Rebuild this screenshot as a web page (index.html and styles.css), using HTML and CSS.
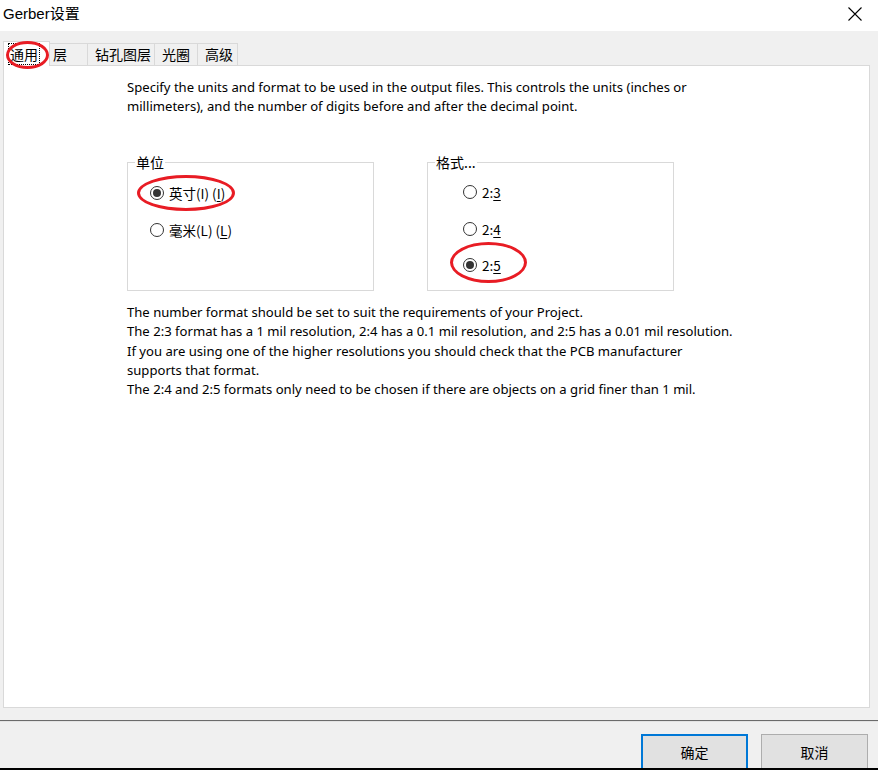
FILE: index.html
```html
<!DOCTYPE html>
<html lang="zh-CN">
<head>
  <meta charset="UTF-8">
  <title>Gerber设置</title>
  <link rel="stylesheet" href="styles.css">
</head>
<body>
  <div class="window">
    <div class="titlebar">
      <span class="title">Gerber设置</span>
      <svg class="close" viewBox="0 0 14 14"><path d="M0.5 0.5L13.5 13.5M13.5 0.5L0.5 13.5" stroke="#000" stroke-width="1.1" fill="none"/></svg>
    </div>

    <div class="dialog">
      <div class="tabs">
        <div class="tab active"><span class="focus">通用</span><span class="mark mark-tab"></span></div>
        <div class="tab t-layer">层</div>
        <div class="tab t-drill">钻孔图层</div>
        <div class="tab t-aperture">光圈</div>
        <div class="tab t-adv">高级</div>
      </div>

      <div class="panel">
        <p class="intro">Specify the units and format to be used in the output files. This controls the units (inches or millimeters), and the number of digits before and after the decimal point.</p>

        <div class="groups">
          <fieldset class="group">
            <legend>单位</legend>
            <label class="radio">
              <span class="dot checked"></span>英寸(I) (<u>I</u>)
              <span class="mark mark-inch"></span>
            </label>
            <label class="radio">
              <span class="dot"></span>毫米(L) (<u>L</u>)
            </label>
          </fieldset>

          <fieldset class="group format">
            <legend>格式...</legend>
            <label class="radio"><span class="dot"></span>2:<u>3</u></label>
            <label class="radio"><span class="dot"></span>2:<u>4</u></label>
            <label class="radio">
              <span class="dot checked"></span>2:<u>5</u>
              <span class="mark mark-fmt"></span>
            </label>
          </fieldset>
        </div>

        <div class="notes">
          <p>The number format should be set to suit the requirements of your Project.</p>
          <p>The 2:3 format has a 1 mil resolution, 2:4 has a 0.1 mil resolution, and 2:5 has a 0.01 mil resolution.</p>
          <p>If you are using one of the higher resolutions you should check that the PCB manufacturer<br>supports that format.</p>
          <p>The 2:4 and 2:5 formats only need to be chosen if there are objects on a grid finer than 1 mil.</p>
        </div>
      </div>

      <div class="separator"></div>

      <div class="buttons">
        <button class="btn default">确定</button>
        <button class="btn">取消</button>
      </div>
    </div>
  </div>
</body>
</html>
```

FILE: styles.css
```css
*, *::before, *::after { box-sizing: border-box; }
body { margin: 0; background: #fff; font-family: "Noto Sans", "Noto Sans CJK SC", sans-serif; font-size: 13.1px; color: #000; }
.window { width: 878px; height: 770px; display: flex; flex-direction: column; border-bottom: 2px solid #000; overflow: hidden; }

/* タイトルバー */
.titlebar { height: 31px; flex-shrink: 0; display: flex; align-items: center; justify-content: space-between; background: #fff; padding: 0 16px 0 3px; }
.title { font-size: 15px; margin-top: -6px; font-family: "Liberation Sans", "Noto Sans CJK SC", sans-serif; }
.close { width: 14px; height: 14px; margin-top: -4px; }

.dialog { flex: 1; background: #f0f0f0; display: flex; flex-direction: column; }

/* タブ */
.tabs { display: flex; align-items: flex-end; padding: 10px 0 0 3px; height: 34px; position: relative; z-index: 1; }
.tab { height: 22px; padding-left: 7px; border: 1px solid #d9d9d9; border-bottom: none; border-left: none; background: #f0f0f0; font-family: "Noto Sans CJK SC", sans-serif; font-size: 14px; line-height: 20px; white-space: nowrap; }
.t-layer { width: 38px; padding-left: 3px; }
.t-drill { width: 67px; }
.t-aperture { width: 43px; }
.t-adv { width: 40px; }
.tab.active { width: 47px; height: 25px; background: #fff; border-left: 1px solid #d9d9d9; padding: 2px 0 0 5px; position: relative; z-index: 2; margin-bottom: -1px; }
.focus { outline: 1px dotted #000; outline-offset: 0; padding: 0 1px; }

/* パネル */
.panel { height: 643px; margin: 0 8px 0 3px; background: #fff; border: 1px solid #d9d9d9; padding: 12px 0 0 123px; }
.intro { margin: 0; width: 590px; line-height: 19px; }

.groups { display: flex; gap: 53px; margin-top: 39px; }
.group { position: relative; width: 247px; height: 136px; margin: 0; border: 1px solid #d9d9d9; padding: 13px 0 0 22px; }
.group legend { font-family: "Noto Sans CJK SC", sans-serif; font-size: 14px; padding: 0 1px; margin-left: -15px; line-height: 15px; }
.group.format { padding: 12px 0 0 35px; }
.group.format legend { margin-left: -28px; }

.radio { position: relative; display: flex; align-items: center; height: 20px; margin-bottom: 17px; font-family: "Noto Sans CJK SC", sans-serif; font-size: 13.5px; }
.format .radio { margin-bottom: 16.5px; }
.radio u { text-decoration-thickness: 1px; text-underline-offset: 2px; }
.dot { width: 14px; height: 14px; border: 1px solid #333; border-radius: 50%; margin-right: 5px; display: flex; align-items: center; justify-content: center; background: #fff; }
.dot.checked::after { content: ""; width: 8px; height: 8px; border-radius: 50%; background: #333; }

/* 注記 */
.notes { margin-top: 12px; }
.notes p { margin: 0; line-height: 19.3px; }

/* 赤丸 */
.mark { position: absolute; border: 3px solid #e81c24; border-radius: 50%; pointer-events: none; }
.mark-tab { left: 2px; top: -1px; width: 43px; height: 28px; }
.mark-inch { left: -13px; top: -8px; width: 98px; height: 36px; }
.mark-fmt { left: -13px; top: -13px; width: 77px; height: 41px; }

/* ボタン */
.separator { height: 2px; margin-top: 12px; border-top: 1px solid #6b6b6b; border-bottom: 1px solid #e3e3e3; }
.buttons { display: flex; justify-content: flex-end; gap: 13px; padding: 12px 10px 0 0; }
.btn { width: 107px; height: 36px; border: 1px solid #adadad; background: #e1e1e1; font-family: "Noto Sans CJK SC", sans-serif; font-size: 14px; color: #000; padding: 0; }
.btn.default { border: 2px solid #0078d7; }
```
